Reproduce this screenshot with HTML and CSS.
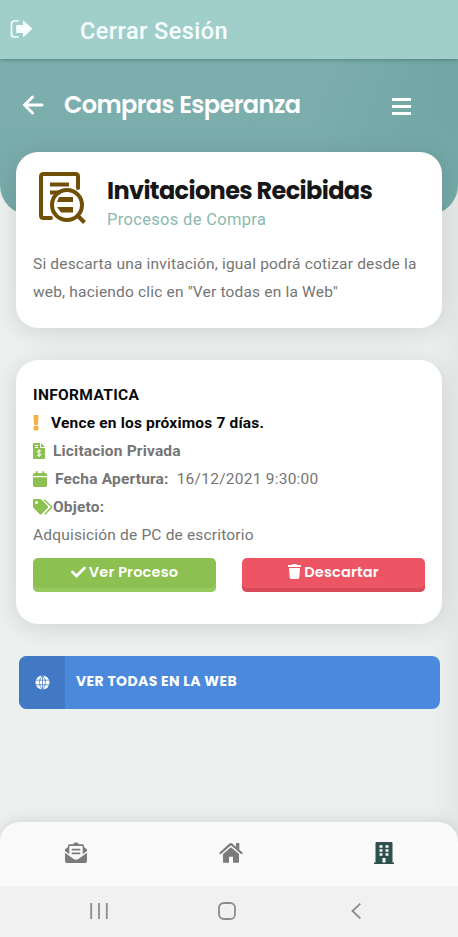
FILE: index.html
```html
<!DOCTYPE html>
<html lang="es">
<head>
<meta charset="utf-8">
<meta name="viewport" content="width=device-width, initial-scale=1">
<title>Compras Esperanza</title>
<link rel="stylesheet" href="styles.css">
</head>
<body>
<div class="app">
  <header class="topbar">
    <svg class="icon-exit" viewBox="0 0 23 18"><path d="M8 1H4.500Q1.500 1 1.500 4v10q0 3 3 3H8" fill="none" stroke="currentColor" stroke-width="1.700" stroke-linecap="round"/><path d="M7 5h6V1.200q0-1 .9-.3l7.700 7.200q.8.700 0 1.400l-7.700 7.200q-.9.700-.9-.3V13H7q-.8 0-.8-.8V5.800q0-.8.8-.8z" fill="currentColor"/></svg>
    <span class="logout">Cerrar Sesión</span>
  </header>

  <main class="content">
    <div class="hero">
      <svg class="icon-back" viewBox="0 0 22 20"><path d="M10.500 2 2.500 10l8 8M3 10h17" fill="none" stroke="currentColor" stroke-width="3" stroke-linecap="round" stroke-linejoin="round"/></svg>
      <h1 class="title">Compras Esperanza</h1>
      <svg class="icon-menu" viewBox="0 0 19 17"><path d="M0 1.500h19M0 8.500h19M0 15.500h19" stroke="currentColor" stroke-width="2.900"/></svg>
    </div>

    <section class="card intro">
      <div class="intro-head">
        <svg class="icon-doc" viewBox="0 0 48 54"><g fill="none" stroke="currentColor" stroke-width="4"><path d="M12 46H4.500Q2 46 2 43.500V4.500Q2 2 4.500 2h32Q39 2 39 4.500V16" stroke-linecap="round" stroke-linejoin="round"/><path d="M11 12.500h19M11 20.500h10" stroke-width="3.800"/><circle cx="28" cy="33" r="15" stroke-width="4"/><path d="m38.500 43.500 7 7"/></g><path d="M20 25h14v5H18zM18 35h16v5.500H22z" fill="currentColor"/></svg>
        <div>
          <h2 class="intro-title">Invitaciones Recibidas</h2>
          <p class="intro-sub">Procesos de Compra</p>
        </div>
      </div>
      <p class="intro-text">Si descarta una invitación, igual podrá cotizar desde la<br>web, haciendo clic en "Ver todas en la Web"</p>
    </section>

    <section class="card detail">
      <p class="row name"><b>INFORMATICA</b></p>
      <p class="row due"><svg viewBox="0 0 6 16"><path d="M.5 1Q.5 0 1.500 0h3q1 0 1 1L5 9q0 1-1 1H2Q1 10 1 9z" fill="currentColor"/><circle cx="3" cy="13" r="2.600" fill="currentColor"/></svg><b>Vence en los próximos 7 días.</b></p>
      <p class="row kind"><svg viewBox="0 0 12 16"><path d="M1 0h6v4q0 1 1 1h4v10q0 1-1 1H1q-1 0-1-1V1q0-1 1-1zm7 0 4 4H8z" fill="currentColor"/><path d="M2 2.500h3M2 4.500h3M8 8Q4.200 6.800 4.300 8.600C4.400 10.300 7.900 9.800 7.900 11.500 8 13.300 4.800 13 4 12M6 6.500v7.500" fill="none" stroke="#fff" stroke-width="1"/></svg><b>Licitacion Privada</b></p>
      <p class="row date"><svg viewBox="0 0 14 16"><path d="M0 5V4q0-2 2-2h1V.8Q3 0 3.800 0t.8.800V2h4.800V.8q0-.8.800-.8T11 .8V2h1q2 0 2 2v1zM0 6.200h14v8q0 1.800-1.800 1.800H1.800Q0 16 0 14.200z" fill="currentColor"/></svg><b>Fecha Apertura:</b><span>16/12/2021 9:30:00</span></p>
      <p class="row object"><svg viewBox="0 0 20 16"><path fill-rule="evenodd" d="M0 1.500Q0 0 1.500 0h5.400q.9 0 1.500.6l6.300 6.300q1 1.100 0 2.200l-6 6q-1.100 1-2.200 0L.6 9Q0 8.400 0 7.500zM3.500 2a1.500 1.500 0 1 0 0 3 1.500 1.500 0 0 0 0-3z" fill="currentColor"/><path d="m11 .7 7.200 6.600q.7.700 0 1.400l-6.400 6.500" fill="none" stroke="currentColor" stroke-width="1.500"/></svg><b>Objeto:</b></p>
      <p class="row">Adquisición de PC de escritorio</p>
      <div class="actions">
        <button class="btn view"><svg viewBox="0 0 15 12"><path d="m1.500 6 4 4 8-8" fill="none" stroke="currentColor" stroke-width="2.800" stroke-linecap="round"/></svg><span>Ver Proceso</span></button>
        <button class="btn discard"><svg viewBox="0 0 13 15"><path d="M0 1h4l.6-1h3.800L9 1h4v2H0zM1 4h11l-.7 9.600q-.1 1.400-1.500 1.400H3.200q-1.400 0-1.500-1.400z" fill="currentColor"/></svg><span>Descartar</span></button>
      </div>
    </section>

    <a class="web">
      <span class="web-icon"><svg viewBox="0 0 16 16"><circle cx="8" cy="8" r="7.500" fill="currentColor"/><path d="M0 5.500h16M0 10.500h16M8 0v16M8 0Q1.500 8 8 16M8 0q6.500 8 0 16" fill="none" stroke="#4179c4" stroke-width=".8"/></svg></span>
      <span class="web-label">VER TODAS EN LA WEB</span>
    </a>
  </main>

  <nav class="tabs">
    <svg class="tab-mail" viewBox="0 0 24 22"><path d="M.5 9.500V8.200Q.5 7.500 1.200 7l2.300-1.600V4.500Q3.500 2.300 5.500 2.300H8.800L10.500.9q1.500-1.200 3 0l1.700 1.400h3.300q2 0 2 2.200v.9L22.800 7q.7.500.7 1.200v1.300L19 12.800V4.800q0-.6-.6-.6H5.600q-.6 0-.6.600v8zM.5 11.200l9 6.500q2.500 1.700 5 0l9-6.500V20q0 2-2 2h-19q-2 0-2-2z" fill="currentColor"/><path d="M7.500 8h9M7.500 12h9" stroke="currentColor" stroke-width="1.900"/></svg>
    <svg class="tab-home" viewBox="0 0 24 21"><path d="M1.500 11 11 2.700q1-.9 2 0L22.500 11" fill="none" stroke="currentColor" stroke-width="2.200" stroke-linecap="round"/><path d="M17 1h3.300v7L17 5.200zM4 12l8-6.800 8 6.800v8q0 .8-.8.800H14v-6h-4v6H4.800q-.8 0-.8-.8z" fill="currentColor"/></svg>
    <svg class="tab-building" viewBox="0 0 20 22"><path d="M1.500 1q0-1 1-1h15q1 0 1 1v19.500H20V22H0v-1.500h1.500z" fill="currentColor"/><path d="M5.500 3.200h3v2.600h-3zm6 0h3v2.600h-3zm-6 4h3v2.600h-3zm6 0h3v2.600h-3zm-6 4h3v2.600h-3zm6 0h3v2.600h-3zM8.500 16h3v4.500h-3z" fill="#fafafa"/></svg>
  </nav>

  <footer class="system">
    <svg class="sys-recent" viewBox="0 0 18 16"><path d="M1.200 0v16M9 0v16M16.800 0v16" stroke="currentColor" stroke-width="1.800"/></svg>
    <svg class="sys-home" viewBox="0 0 18 18"><rect x="1" y="1" width="16" height="16" rx="4.800" fill="none" stroke="currentColor" stroke-width="1.800"/></svg>
    <svg class="sys-back" viewBox="0 0 10 16"><path d="M9.300.7 1.500 8l7.800 7.300" fill="none" stroke="currentColor" stroke-width="1.800"/></svg>
  </footer>
</div>
</body>
</html>
```
FILE: styles.css
```css
* { box-sizing: border-box; margin: 0; padding: 0; }
body { background: #ecf1f0; font-family: Roboto, "Liberation Sans", sans-serif; font-size: 15.5px; line-height: 28px; letter-spacing: .18px; color: #757575; }
svg { display: block; flex: none; }

.app { width: 458px; height: 937px; display: flex; flex-direction: column; overflow: hidden; background: linear-gradient(90deg, #ecf1f0 94%, #e3e7e6); }

.topbar { height: 59px; flex: none; display: flex; align-items: center; padding: 2px 0 0 10px; background: #a0cecb; color: #f7fffe; box-shadow: 0 1px 4px rgba(30, 80, 78, .45); z-index: 1; }
.icon-exit { width: 23px; height: 18px; margin-top: -3px; }
.logout { margin-left: 47px; font-size: 23.5px; font-weight: 500; letter-spacing: .45px; }

.content { flex: 1; display: flex; flex-direction: column; }
.hero { height: 156px; flex: none; display: flex; align-items: flex-start; padding: 36px 47px 0 22px; color: #fff; border-radius: 0 0 30px 30px;
  background: radial-gradient(ellipse 150px 190px at 100% 20%, #71a6a4, rgba(113, 166, 164, 0)), linear-gradient(180deg, #7dafae, #76abaa); }
.icon-back { width: 22px; height: 20px; }
.title { flex: 1; margin-left: 20px; font: 600 24px/28px Poppins, Inter, sans-serif; margin-top: -4px; letter-spacing: -.6px; white-space: nowrap; }
.icon-menu { width: 19px; height: 17px; margin-top: 3px; }

.card { margin: 0 16px; background: #fff; border-radius: 22px; box-shadow: 0 4px 24px rgba(0, 0, 0, .12); padding: 0 17px; flex: none; white-space: nowrap; }
.intro { height: 176px; margin-top: -63px; padding-top: 20px; }
.intro-head { display: flex; gap: 20px; height: 78px; padding-left: 6px; }
.icon-doc { width: 48px; height: 54px; color: #705006; }
.intro-title { font: 700 24px/30px Poppins, Inter, sans-serif; color: #171717; margin-top: 4px; letter-spacing: -.63px; }
.intro-sub { font-size: 16.5px; line-height: 27px; letter-spacing: .32px; color: #8bb9ae; }

.detail { height: 264px; margin-top: 32px; padding-top: 21px; }
.row { display: flex; align-items: center; height: 28px; }
.row b { font-weight: 700; }
.name, .due b { color: #0a0a0a; }
.name { letter-spacing: .35px; }
.row svg { color: #8cc152; height: 16px; }
.due svg { width: 6px; margin-right: 12px; color: #f3b13f; }
.kind svg { width: 12px; margin-right: 8px; }
.date svg { width: 14px; margin-right: 8px; }
.date span { margin-left: 8px; letter-spacing: .25px; }
.object svg { width: 20px; }
.actions { display: grid; grid-template-columns: 183px 183px; gap: 26px; margin-top: 9px; }
.btn { display: flex; align-items: flex-start; justify-content: center; gap: 3px; height: 34px; padding-top: 7px; border: 0; border-radius: 5px; color: #fff; font: 600 14.5px/15px Poppins, Inter, sans-serif; letter-spacing: .18px; }
.view { background: #8cc152; box-shadow: inset 0 -4px #96c95e; }
.view svg { width: 15px; height: 12px; margin-top: 1px; }
.discard { background: #ed5565; box-shadow: inset 0 -4px #d84b5b; }
.discard svg { width: 13px; height: 15px; margin-top: -1px; }

.web { display: flex; align-items: stretch; height: 53px; margin: 32px 18px 0 19px; border-radius: 8px; overflow: hidden; background: #4a89dc; color: #fff; }
.web-icon { width: 46px; display: grid; place-items: center; background: #4179c4; }
.web-icon svg { width: 15px; height: 15px; }
.web-label { margin-left: 11px; font: 700 14px/51px Poppins, Inter, sans-serif; letter-spacing: .38px; white-space: nowrap; }

.tabs { height: 64px; flex: none; display: flex; justify-content: space-between; align-items: flex-start; padding: 20px 64px 0; background: #fafafa; color: #7b7b7b; border-radius: 20px 20px 0 0; box-shadow: 0 -2px 14px rgba(0, 0, 0, .1); }
.tab-mail { width: 24px; height: 21px; }
.tab-home { width: 24px; height: 21px; }
.tab-building { width: 20px; height: 22px; color: #2e504f; }

.system { height: 51px; flex: none; display: flex; align-items: center; padding: 0 97px 2px 90px; background: #f1f1f1; color: #8c8c8c; }
.sys-recent { width: 18px; height: 16px; }
.sys-home { width: 18px; height: 18px; margin-left: 110px; }
.sys-back { width: 10px; height: 16px; margin-left: auto; }
```
